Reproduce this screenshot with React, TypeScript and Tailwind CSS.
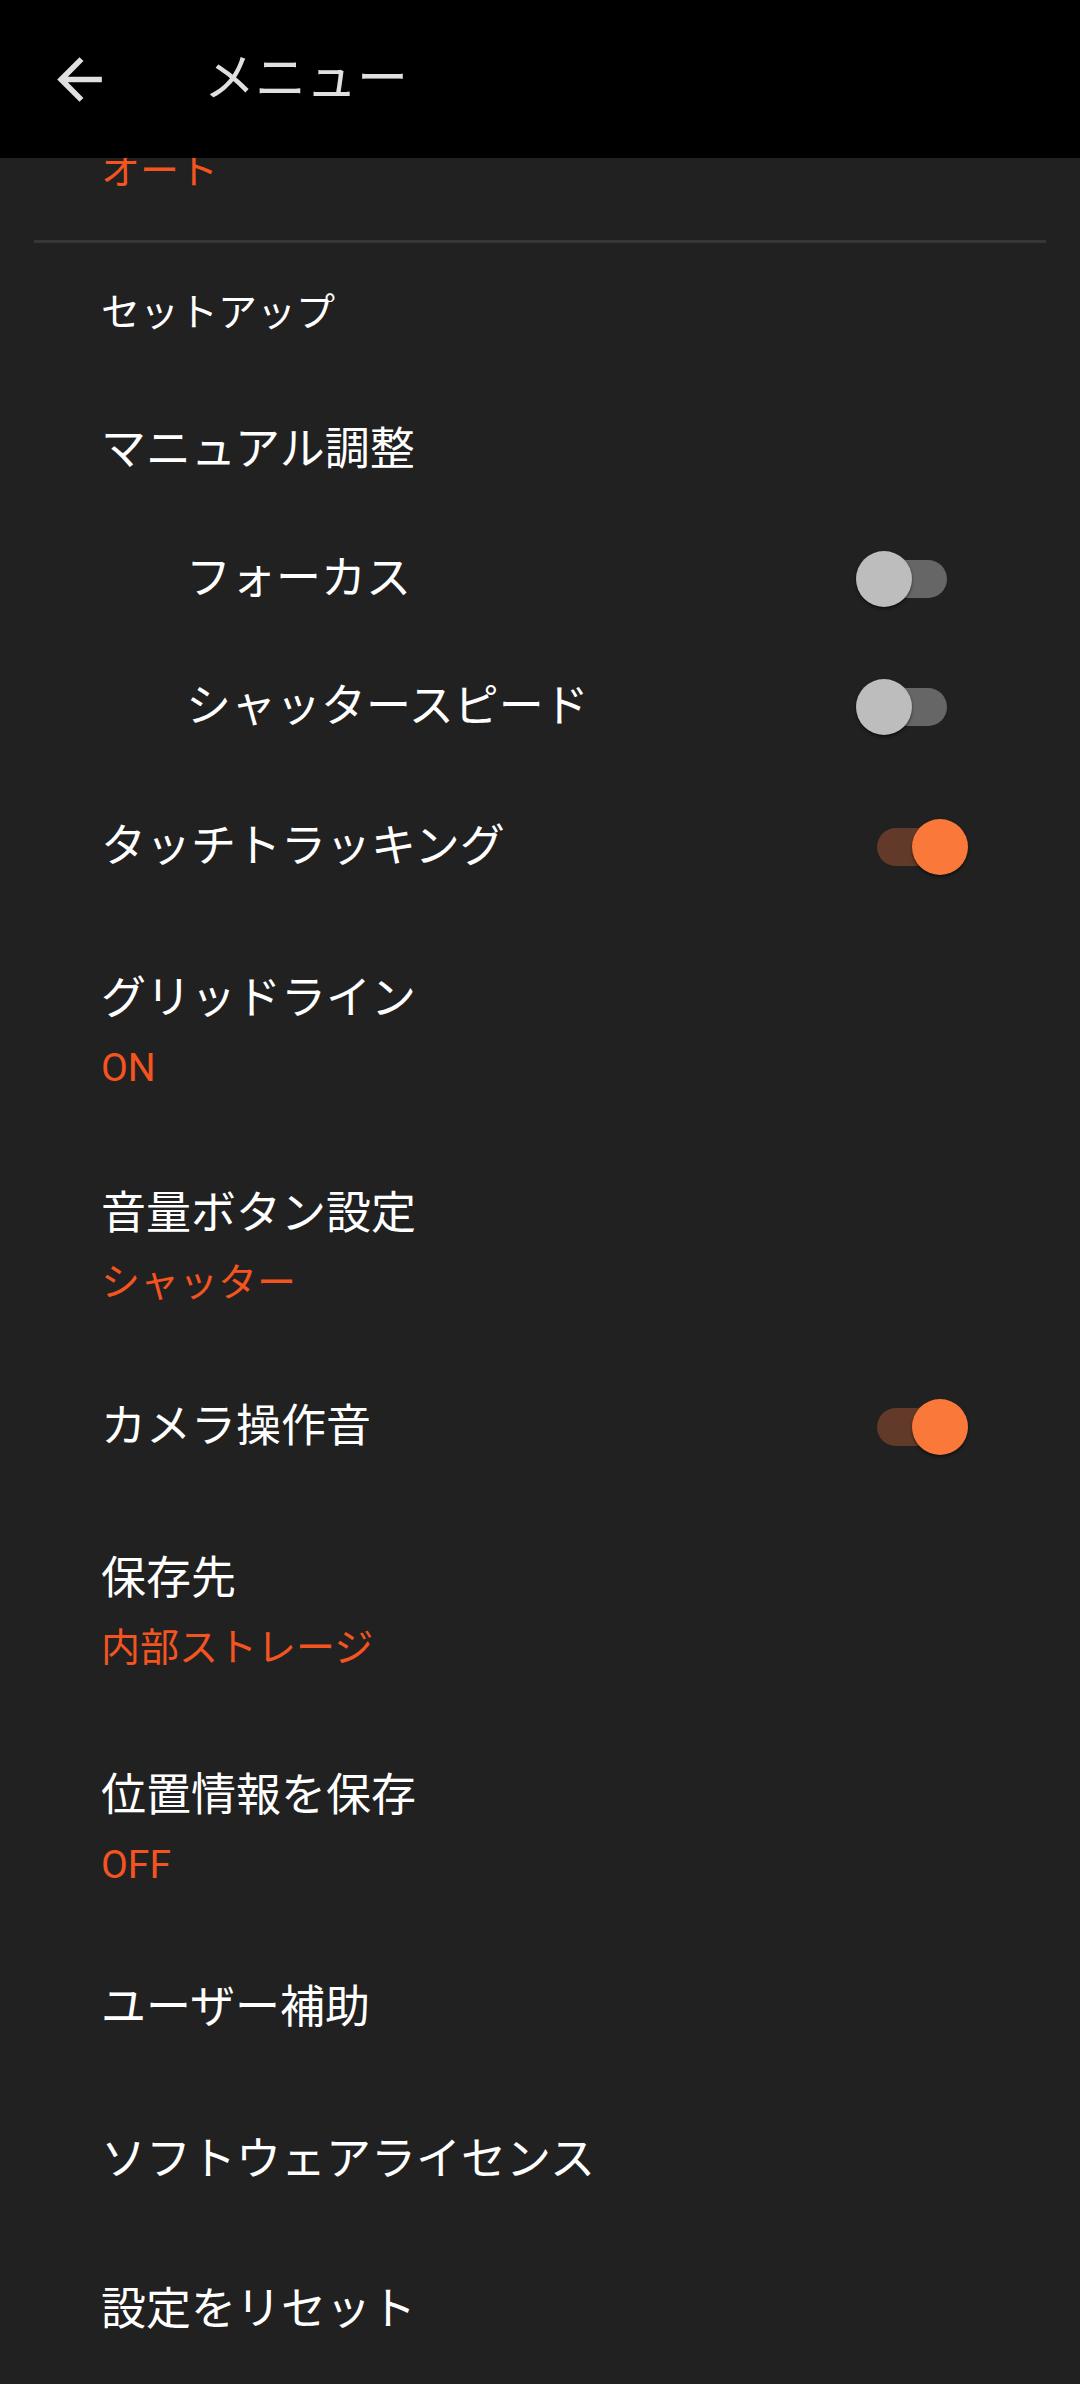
import React from "react";

const FONT = { fontFamily: "Roboto, 'Noto Sans CJK JP', 'Noto Sans', sans-serif" };

function Toggle({ on }: { on: boolean }) {
  return (
    <div
      className={
        "relative w-[89px] h-[38px] rounded-full shrink-0 " +
        (on ? "bg-[#633a2a]" : "bg-[#666666]")
      }
    >
      <div
        className={
          "absolute top-[-9px] w-[56px] h-[56px] rounded-full shadow-[0_2px_3px_rgba(0,0,0,0.5)] " +
          (on ? "right-[-2px] bg-[#fa783a]" : "left-[-2px] bg-[#bdbdbd]")
        }
      />
    </div>
  );
}

function Row({
  h,
  title,
  summary,
  sub,
  toggle,
  low,
}: {
  h: number;
  title: string;
  summary?: string;
  sub?: boolean;
  toggle?: boolean;
  low?: boolean;
}) {
  return (
    <div
      className={
        "flex items-center justify-between " +
        (sub ? "pl-[186px] pr-[133px]" : "pl-[101px] pr-[114px]") +
        (low ? " pt-[5px]" : "")
      }
      style={{ height: h }}
    >
      <div className="flex flex-col">
        <div className="text-[45px] leading-[56px] text-white">{title}</div>
        {summary && (
          <div className="mt-[16px] text-[39px] leading-[50px] text-[#f4541f]">{summary}</div>
        )}
      </div>
      {toggle !== undefined && <Toggle on={toggle} />}
    </div>
  );
}

export default function App() {
  return (
    <div className="w-[1080px] h-[2384px] bg-[#212121] overflow-hidden flex flex-col" style={FONT}>
      <div className="h-[158px] bg-black flex items-center shrink-0 relative z-10">
        <div className="w-[204px] pl-[46px] flex items-center">
          <svg width="67" height="67" viewBox="0 0 24 24" fill="#e0e0e0">
            <path d="M20 11H7.83l5.59-5.59L12 4l-8 8 8 8 1.41-1.41L7.83 13H20v-2z" />
          </svg>
        </div>
        <div className="text-[51px] leading-[60px] text-[#e0e0e0]">メニュー</div>
      </div>

      <div className="h-[82px] overflow-hidden pl-[101px]">
        <div className="-mt-[12px] text-[39px] leading-[50px] text-[#f4541f]">オート</div>
      </div>
      <div className="mx-[34px] h-[3px] bg-[#363636]" />

      <div className="h-[136px] flex items-center pl-[101px] pt-[3px]">
        <div className="text-[39px] leading-[50px] text-white">セットアップ</div>
      </div>
      <Row h={136} title="マニュアル調整" low />
      <Row h={122} title="フォーカス" sub toggle={false} low />
      <Row h={134} title="シャッタースピード" sub toggle={false} low />
      <Row h={152} title="タッチトラッキング" toggle={true} />
      <Row h={218} title="グリッドライン" summary="ON" />
      <Row h={212} title="音量ボタン設定" summary="シャッター" />
      <Row h={148} title="カメラ操作音" toggle={true} />
      <Row h={222} title="保存先" summary="内部ストレージ" />
      <Row h={212} title="位置情報を保存" summary="OFF" />
      <Row h={146} title="ユーザー補助" />
      <Row h={158} title="ソフトウェアライセンス" />
      <Row h={142} title="設定をリセット" />
    </div>
  );
}
